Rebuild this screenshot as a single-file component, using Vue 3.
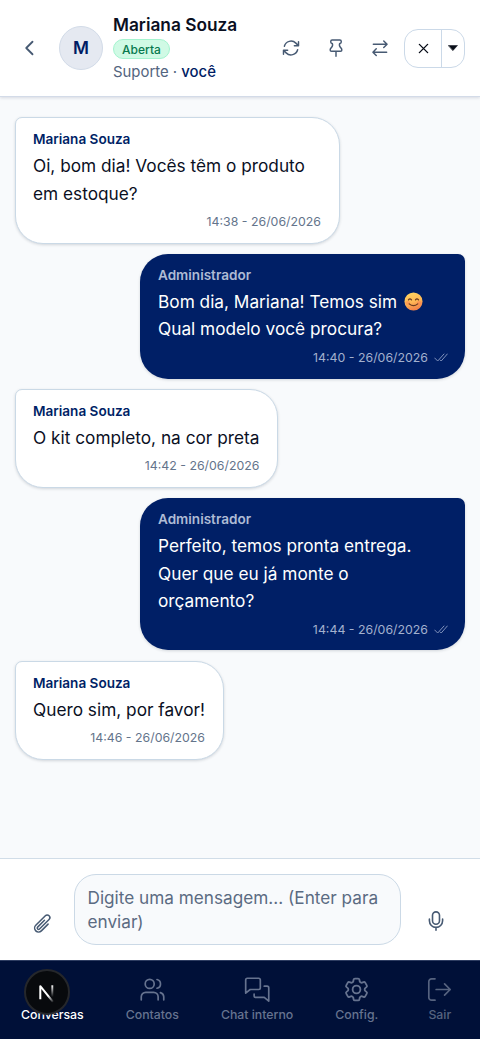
<script setup>
const messages = [
  { id: 1, author: 'Mariana Souza', lines: ['Oi, bom dia! Vocês têm o produto', 'em estoque?'], time: '14:38 - 26/06/2026', wide: true },
  { id: 2, author: 'Administrador', lines: ['Bom dia, Mariana! Temos sim', 'Qual modelo você procura?'], time: '14:40 - 26/06/2026', wide: true, out: true, smile: true },
  { id: 3, author: 'Mariana Souza', lines: ['O kit completo, na cor preta'], time: '14:42 - 26/06/2026' },
  { id: 4, author: 'Administrador', lines: ['Perfeito, temos pronta entrega.', 'Quer que eu já monte o', 'orçamento?'], time: '14:44 - 26/06/2026', wide: true, out: true },
  { id: 5, author: 'Mariana Souza', lines: ['Quero sim, por favor!'], time: '14:46 - 26/06/2026' },
]
</script>

<template>
  <div class="app">
    <header class="top">
      <button class="back" aria-label="Voltar">
        <svg width="20" height="20" viewBox="0 0 24 24"><path d="m15 4.500-7.500 7.500 7.500 7.500" stroke-width="2.200" /></svg>
      </button>
      <div class="avatar">M</div>
      <div class="who">
        <div class="name">Mariana Souza</div>
        <div class="status">Aberta</div>
        <div class="team">Suporte · <b>você</b></div>
      </div>
      <div class="actions">
        <button class="act" aria-label="Atualizar">
          <svg width="20" height="20" viewBox="0 0 24 24"><path d="M16.023 9.348h4.992V4.356M2.985 19.644v-4.992h4.992M2.985 14.652l3.181 3.183a8.250 8.250 0 0 0 13.803-3.700M4.031 9.865a8.250 8.250 0 0 1 13.803-3.700l3.181 3.182" /></svg>
        </button>
        <button class="act" aria-label="Fixar">
          <svg width="20" height="20" viewBox="0 0 24 24"><path d="M12 16.500V22M7.300 2.500h9.400a1.600 1.600 0 0 1 1.600 1.600v.8a1.600 1.600 0 0 1-1.600 1.600h-.3c-.7 2 .1 4.100 1.500 5.400.8.700 1.100 1.500 1.100 2.500a1.600 1.600 0 0 1-1.600 1.600H6.600A1.600 1.600 0 0 1 5 14.400c0-1 .3-1.800 1.100-2.500 1.400-1.300 2.200-3.400 1.500-5.400h-.3a1.600 1.600 0 0 1-1.600-1.600v-.8a1.600 1.600 0 0 1 1.600-1.600z" /></svg>
        </button>
        <button class="act" aria-label="Transferir">
          <svg width="20" height="20" viewBox="0 0 24 24"><path d="M4 7.500h16.500M16.500 3.500l4 4-4 4M20 17H3.500M7.500 13l-4 4 4 4" /></svg>
        </button>
        <div class="split">
          <button class="close" aria-label="Fechar">
            <svg width="11" height="11" viewBox="0 0 12 12"><path d="m1.500 1.500 9 9M10.500 1.500l-9 9" stroke-width="1.500" /></svg>
          </button>
          <button class="more" aria-label="Mais opções">
            <svg width="10" height="6" viewBox="0 0 10 6"><path class="solid" d="M.5.5h9L5 5.500z" /></svg>
          </button>
        </div>
      </div>
    </header>

    <main class="thread">
      <article v-for="m in messages" :key="m.id" class="bubble" :class="{ out: m.out, wide: m.wide }">
        <div class="author">{{ m.author }}</div>
        <div class="text">
          <div v-for="(line, i) in m.lines" :key="i" class="line">
            <span>{{ line }}</span>
            <svg v-if="m.smile && i === 0" class="smile" width="19" height="19" viewBox="0 0 20 20">
              <defs>
                <linearGradient id="face" x1="0" y1="0" x2="0.300" y2="1">
                  <stop offset="0" stop-color="#ffd763" />
                  <stop offset="0.600" stop-color="#ffb855" />
                  <stop offset="1" stop-color="#f3854a" />
                </linearGradient>
              </defs>
              <circle cx="10" cy="10" r="9.500" fill="url(#face)" stroke="none" />
              <ellipse cx="4" cy="11.500" rx="2.600" ry="2" fill="#ff7650" opacity=".4" stroke="none" />
              <ellipse cx="16" cy="11.500" rx="2.600" ry="2" fill="#ff7650" opacity=".4" stroke="none" />
              <path class="feature" d="M4.700 8.300q1.500-2.300 3.200 0M12.100 8.300q1.500-2.300 3.200 0M5.500 12.500q4.500 3.700 9 0" />
            </svg>
          </div>
        </div>
        <div class="time">
          {{ m.time }}
          <svg v-if="m.out" class="ticks" width="14" height="9" viewBox="0 0 14 9"><path d="m.700 5 3 3 6.300-7M6.200 7l1 1L13.300 1" /></svg>
        </div>
      </article>
    </main>

    <section class="composer">
      <button class="clip" aria-label="Anexar">
        <svg width="21" height="21" viewBox="0 0 24 24"><path d="m18.375 12.739-7.693 7.693a4.500 4.500 0 0 1-6.364-6.364l10.940-10.940A3 3 0 1 1 19.500 7.372L8.552 18.320m.009-.010-.010.010m5.699-9.941-7.810 7.810a1.500 1.500 0 0 0 2.112 2.130" /></svg>
      </button>
      <div class="field">Digite uma mensagem... (Enter para<br>enviar)</div>
      <button class="mic" aria-label="Gravar">
        <svg width="22" height="22" viewBox="0 0 24 24"><rect x="8.200" y="2" width="7.600" height="13.500" rx="3.800" /><path d="M19.200 10v1.800a7.200 7.200 0 0 1-14.400 0V10M12 19v3" /></svg>
      </button>
    </section>

    <nav class="tabs">
      <a class="tab active">
        <span class="glyph"></span>
        <span>Conversas</span>
        <span class="dev">
          <svg width="42" height="42" viewBox="0 0 42 42">
            <defs>
              <linearGradient id="diag" x1="20" y1="22" x2="28" y2="31" gradientUnits="userSpaceOnUse"><stop offset="0.300" stop-color="#fff" /><stop offset="1" stop-color="#fff" stop-opacity="0" /></linearGradient>
              <linearGradient id="stem" x1="0" y1="14" x2="0" y2="26" gradientUnits="userSpaceOnUse"><stop offset="0" stop-color="#fff" /><stop offset="1" stop-color="#fff" stop-opacity="0" /></linearGradient>
            </defs>
            <path d="M14.300 28.200V15.200L27 30.800" stroke="url(#diag)" stroke-width="2" stroke-linecap="butt" />
            <path d="M26.300 14.300v13" stroke="url(#stem)" stroke-width="1.900" stroke-linecap="butt" />
          </svg>
        </span>
      </a>
      <a class="tab">
        <svg class="glyph" width="27" height="27" viewBox="0 0 24 24"><circle cx="9.500" cy="7" r="4" /><path d="M2 21.200v-2.700a4 4 0 0 1 4-4h7a4 4 0 0 1 4 4v2.700M16 3.100a4 4 0 0 1 0 7.800M19 14.800a4 4 0 0 1 3 3.700v2.700" /></svg>
        <span>Contatos</span>
      </a>
      <a class="tab">
        <svg class="glyph" width="27" height="27" viewBox="0 0 24 24"><path d="M14.500 10.500a1.500 1.500 0 0 1-1.500 1.500H5.500L1.500 15.200V3.500A1.500 1.500 0 0 1 3 2h10a1.500 1.500 0 0 1 1.500 1.500zM18 9h2.500a1.500 1.500 0 0 1 1.500 1.500v11.800L18 19h-7.500A1.500 1.500 0 0 1 9 17.500V16" /></svg>
        <span>Chat interno</span>
      </a>
      <a class="tab">
        <svg class="glyph" width="27" height="27" viewBox="0.900 0.900 22.200 22.200"><path d="M9.594 3.940c.090-.542.560-.940 1.110-.940h2.593c.550 0 1.020.398 1.110.940l.213 1.281c.063.374.313.686.645.870.074.040.147.083.220.127.325.196.720.257 1.075.124l1.217-.456a1.125 1.125 0 0 1 1.370.490l1.296 2.247a1.125 1.125 0 0 1-.260 1.431l-1.003.827c-.293.241-.438.613-.430.992a7.723 7.723 0 0 1 0 .255c-.008.378.137.750.430.991l1.004.827c.424.350.534.955.260 1.430l-1.298 2.247a1.125 1.125 0 0 1-1.369.491l-1.217-.456c-.355-.133-.750-.072-1.076.124a6.470 6.470 0 0 1-.220.128c-.331.183-.581.495-.644.869l-.213 1.281c-.090.543-.560.940-1.110.940h-2.594c-.550 0-1.019-.398-1.110-.940l-.213-1.281c-.062-.374-.312-.686-.644-.870a6.520 6.520 0 0 1-.220-.127c-.325-.196-.720-.257-1.076-.124l-1.217.456a1.125 1.125 0 0 1-1.369-.490l-1.297-2.247a1.125 1.125 0 0 1 .260-1.431l1.004-.827c.292-.240.437-.613.430-.991a6.932 6.932 0 0 1 0-.255c.007-.380-.138-.751-.430-.992l-1.004-.827a1.125 1.125 0 0 1-.260-1.430l1.297-2.247a1.125 1.125 0 0 1 1.370-.491l1.216.456c.356.133.751.072 1.076-.124.072-.044.146-.086.220-.128.332-.183.582-.495.644-.869z" /><circle cx="12" cy="12" r="3.200" /></svg>
        <span>Config.</span>
      </a>
      <a class="tab exit">
        <svg class="glyph" width="27" height="27" viewBox="0 0 24 24"><path d="M8 2.500H5A2.500 2.500 0 0 0 2.500 5v14A2.500 2.500 0 0 0 5 21.500h3M9 12h12.500M16.500 7l5 5-5 5" /></svg>
        <span>Sair</span>
      </a>
    </nav>
  </div>
</template>

<style>
html, body { margin: 0; }
</style>

<style scoped>
.app { width: 480px; height: 1039px; display: flex; flex-direction: column; overflow: hidden; background: #f8fafc; color: #0a0f1f; font-family: Inter, sans-serif; }
.app * { box-sizing: border-box; }
svg { display: block; flex: none; fill: none; stroke: currentColor; stroke-width: 1.750; stroke-linecap: round; stroke-linejoin: round; }
button { display: flex; align-items: center; justify-content: center; padding: 0; border: 0; background: none; color: #475a73; font: inherit; }
.solid { fill: currentColor; stroke-width: .5; }

.top { height: 97px; flex: none; display: flex; align-items: center; padding: 0 15px 0 20px; background: #fff; border-bottom: 1px solid #d3dbe8; box-shadow: 0 1px 3px rgba(15, 23, 60, .14); z-index: 1; }
.back { width: 20px; height: 40px; }
.avatar { width: 44px; height: 44px; flex: none; margin-left: 19px; border: 1px solid #d2dbe8; border-radius: 50%; background: #e5e9f1; color: #001c64; font-size: 17.300px; font-weight: 600; line-height: 42px; text-align: center; }
.who { flex: 1; margin-left: 10px; padding-bottom: 2px; white-space: nowrap; }
.name { height: 24px; line-height: 24px; font-size: 17.300px; font-weight: 600; }
.status { width: 57px; height: 20px; border: 1px solid #a4f4cf; border-radius: 10px; background: #d0fae5; color: #08794f; font-size: 12px; font-weight: 500; line-height: 19px; text-align: center; margin-top: 2px; }
.team { height: 21px; margin-top: 2px; line-height: 22px; font-size: 14.900px; color: #536580; }
.team b { color: #001c64; font-weight: 500; }
.actions { display: flex; align-items: center; }
.act { width: 44.300px; height: 44px; }
.split { display: flex; width: 61px; height: 39px; margin-left: 2px; border: 1px solid #cbd9e8; border-radius: 14px; }
.split button { color: #080d18; }
.close { width: 36px; }
.split .more { flex: 1; border-left: 1px solid #cbd9e8; }

.thread { flex: 1; display: flex; flex-direction: column; align-items: flex-start; gap: 10.500px; padding: 20.400px 15px 0; }
.bubble { padding: 12px 17.500px 12.500px 17px; border: 1px solid #cad9e6; border-radius: 7px 28px 28px 28px; background: #fff; box-shadow: 0 1px 3px rgba(15, 23, 42, .16); }
.bubble.wide { width: 324.500px; }
.bubble.out { align-self: flex-end; width: 325px; padding: 11.800px 17px 12.500px 18px; border: 0; border-radius: 28px 7px 28px 28px; background: #001f66; color: #fff; }
.author { line-height: 18px; font-size: 13.550px; font-weight: 600; color: #001f66; }
.out .author { color: #aebbd5; }
.text { margin-top: 4px; }
.line { display: flex; align-items: center; height: 27.350px; line-height: 27.350px; font-size: 17.250px; white-space: nowrap; }
.smile { margin-left: 7px; }
.feature { stroke: #6c3b20; stroke-width: 1.300; }
.time { display: flex; justify-content: flex-end; align-items: center; margin-top: 6px; line-height: 17px; font-size: 12.350px; color: #64748b; white-space: nowrap; }
.out .time { margin-top: 6.500px; color: #a3b1ce; }
.ticks { margin-left: 6px; stroke-width: 1; color: #7f91bb; }

.composer { height: 102px; flex: none; display: flex; align-items: flex-end; padding: 0 0 15px; border-top: 1px solid #d1dde8; background: #fff; }
.clip { width: 44px; height: 44px; margin-left: 20px; }
.field { width: 327px; height: 71px; margin-left: 10px; padding: 11px 12.500px; border: 1px solid #cbd9e6; border-radius: 22px; background: #f8fafc; color: #5b6b82; font-size: 17.200px; line-height: 24.300px; white-space: nowrap; }
.mic { width: 44px; height: 49px; margin-left: 13px; }

.tabs { height: 79px; flex: none; display: flex; gap: 42px; padding: 15px 0 0 21px; background: #001038; border-top: 1px solid #2e3d62; }
.tab { position: relative; display: flex; flex-direction: column; align-items: center; color: #66738f; font-size: 12.300px; font-weight: 500; line-height: 18px; white-space: nowrap; }
.glyph { width: 27px; height: 27px; margin-bottom: 3px; stroke-width: 1.500; }
.tab.active { color: #fff; }
.tab.exit { margin-left: 6px; color: #56637f; }
.dev { position: absolute; left: 3px; top: -7px; width: 46px; height: 46px; border: 2px solid #25272b; border-radius: 50%; background: #080a0d; }
</style>
